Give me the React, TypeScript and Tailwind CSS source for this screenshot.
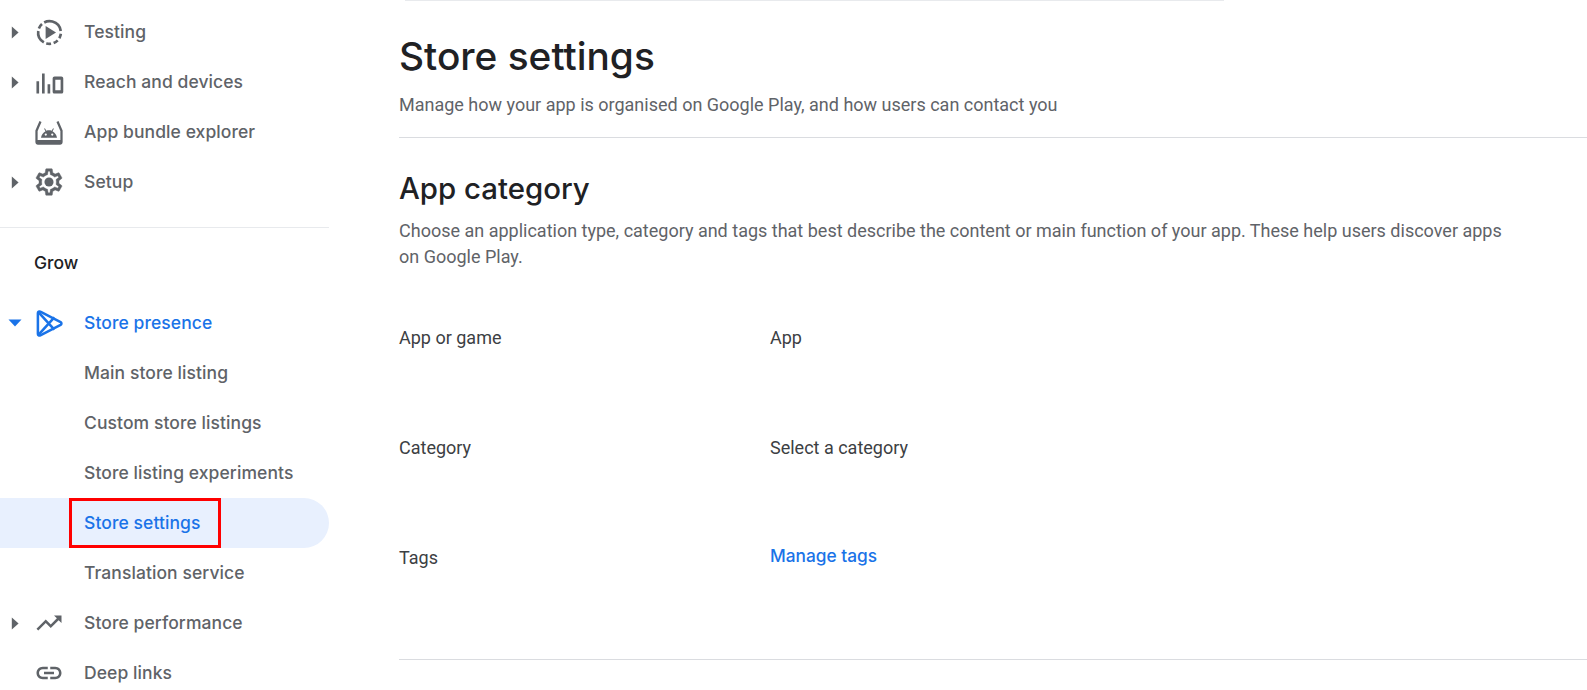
import React from "react";

const GS = "font-['Inter',sans-serif]";

const Arrow = () => (
  <svg width="8" height="13" viewBox="0 0 8 13" className="block">
    <path d="M0.8 0.5 L7.6 6.5 L0.8 12.5 Z" fill="#5f6368" />
  </svg>
);
const ArrowDown = () => (
  <svg width="14" height="8" viewBox="0 0 14 8" className="block">
    <path d="M0.5 0.5 H13.5 L7 7.5 Z" fill="#1a73e8" />
  </svg>
);

const Ico = ({ children, c = "#5f6368", s = 30 }: { children: React.ReactNode; c?: string; s?: number }) => (
  <svg width={s} height={s} viewBox="0 0 24 24" fill={c} className="block shrink-0">
    {children}
  </svg>
);

const Testing = () => (
  <Ico s={29}>
    <circle cx="12" cy="12" r="9.4" fill="none" stroke="#5f6368" strokeWidth="2.2" strokeDasharray="11 2.2 4 2.2 4 2.2 4 2.2 11 2.2 4.5 2.2 10" transform="rotate(-75 12 12)" />
    <path d="M8.8 6.6 L17.4 12 L8.8 17.4 Z" />
  </Ico>
);
const Reach = () => (
  <Ico s={29}>
    <path d="M1.2 11h2.2v10.2H1.2zM5.8 4.6H8v16.6H5.8zM10.4 13.5h2.2v7.7h-2.2z" />
    <path fillRule="evenodd" d="M16.2 7h5.6c.9 0 1.6.7 1.6 1.6v11c0 .9-.7 1.6-1.6 1.6h-5.6c-.9 0-1.6-.7-1.6-1.6v-11c0-.9.7-1.6 1.6-1.6zm.6 2.8v8.6h4.4V9.8z" />
  </Ico>
);
const Bundle = () => (
  <Ico s={30}>
    <path fill="none" stroke="#5f6368" strokeWidth="1.8" d="M5.2 3.6 L2 11 V20.2 c0 .6.4 1 1 1 H21 c.6 0 1-.4 1-1 V11 L18.8 3.6" />
    <path d="M2 18.4h20v2.8H2z" />
    <path d="M5.6 16.6c.3-2.4 1.7-4.3 3.6-5.3L8.1 9.4l.6-.4 1.2 2c.6-.3 1.3-.4 2.1-.4s1.5.1 2.1.4l1.2-2 .6.4-1.1 1.9c1.9 1 3.3 2.9 3.6 5.3z" />
    <circle cx="9.4" cy="14" r=".9" fill="#fff" />
    <circle cx="14.6" cy="14" r=".9" fill="#fff" />
  </Ico>
);
const Gear = () => (
  <Ico s={32}>
    <path d="M19.43 12.98c.04-.32.07-.64.07-.98 0-.34-.03-.66-.07-.98l2.11-1.65c.19-.15.24-.42.12-.64l-2-3.46c-.09-.16-.26-.25-.44-.25-.06 0-.12.01-.17.03l-2.49 1c-.52-.4-1.08-.73-1.69-.98l-.38-2.65C14.46 2.18 14.25 2 14 2h-4c-.25 0-.46.18-.49.42l-.38 2.65c-.61.25-1.17.59-1.69.98l-2.49-1c-.06-.02-.12-.03-.18-.03-.17 0-.34.09-.43.25l-2 3.46c-.13.22-.07.49.12.64l2.11 1.65c-.04.32-.07.65-.07.98 0 .33.03.66.07.98l-2.11 1.65c-.19.15-.24.42-.12.64l2 3.46c.09.16.26.25.44.25.06 0 .12-.01.17-.03l2.49-1c.52.4 1.08.73 1.69.98l.38 2.65c.03.24.24.42.49.42h4c.25 0 .46-.18.49-.42l.38-2.65c.61-.25 1.17-.59 1.69-.98l2.49 1c.06.02.12.03.18.03.17 0 .34-.09.43-.25l2-3.46c.12-.22.07-.49-.12-.64l-2.11-1.65zm-1.98-1.71c.04.31.05.52.05.73 0 .21-.02.43-.05.73l-.14 1.13.89.7 1.08.84-.7 1.21-1.27-.51-1.04-.42-.9.68c-.43.32-.84.56-1.25.73l-1.06.43-.16 1.13-.2 1.35h-1.4l-.19-1.35-.16-1.13-1.06-.43c-.43-.18-.83-.41-1.23-.71l-.91-.7-1.06.43-1.27.51-.7-1.21 1.08-.84.89-.7-.14-1.13c-.03-.31-.05-.54-.05-.74s.02-.43.05-.73l.14-1.13-.89-.7-1.08-.84.7-1.21 1.27.51 1.04.42.9-.68c.43-.32.84-.56 1.25-.73l1.06-.43.16-1.13.2-1.35h1.39l.19 1.35.16 1.13 1.06.43c.43.18.83.41 1.23.71l.91.7 1.06-.43 1.27-.51.7 1.21-1.07.85-.89.7.14 1.13z" stroke="#5f6368" strokeWidth="0.3" />
    <circle cx="12" cy="12" r="3.4" />
  </Ico>
);
const Play = () => (
  <Ico c="#1a73e8" s={29}>
    <g fill="none" stroke="#1a73e8" strokeWidth="2.1" strokeLinejoin="round">
      <path d="M2.4 3.4 c0-1.1 1.1-1.7 2-1.2 L21.2 10.8 c.9.5.9 1.9 0 2.4 L4.4 21.8 c-.9.5-2-.1-2-1.2 Z" />
      <path d="M3.2 3 L16 17 M3.2 21 L16 7" />
    </g>
  </Ico>
);
const Trend = () => (
  <Ico s={30}>
    <path d="M16 6l2.29 2.29-4.88 4.88-4-4L2 16.59 3.41 18l6-6 4 4 6.3-6.29L22 12V6z" />
  </Ico>
);
const LinkIco = () => (
  <Ico s={30}>
    <path d="M17 7h-4v2h4c1.65 0 3 1.35 3 3s-1.35 3-3 3h-4v2h4c2.76 0 5-2.24 5-5s-2.24-5-5-5zm-6 8H7c-1.65 0-3-1.35-3-3s1.35-3 3-3h4V7H7c-2.76 0-5 2.24-5 5s2.24 5 5 5h4v-2zm-3-4h8v2H8z" />
  </Ico>
);

function Row({ label, icon, arrow, active, selected }: { label: string; icon?: React.ReactNode; arrow?: React.ReactNode; active?: boolean; selected?: boolean }) {
  return (
    <div className={`flex h-[50px] items-center rounded-r-[25px] ${selected ? "bg-[#e8f0fe]" : ""}`}>
      <div className="flex w-[36px] shrink-0 items-center pl-[8px]">
        <div className="flex w-[14px] justify-center">{arrow}</div>
      </div>
      <div className="flex w-[26px] shrink-0 items-center justify-center">{icon}</div>
      <span className={`${GS} ml-[22px] pt-[1px] text-[17.5px] font-medium tracking-[0.08px] ${active || selected ? "text-[#1a73e8]" : "text-[#5f6368]"}`}>{label}</span>
    </div>
  );
}

function Field({ label, children }: { label: string; children: React.ReactNode }) {
  return (
    <div className="flex h-[110px] items-start">
      <div className="w-[371px] shrink-0 font-['Roboto',sans-serif] text-[18px] leading-[24px] text-[#3c4043]">{label}</div>
      <div>{children}</div>
    </div>
  );
}

export default function App() {
  return (
    <div className="relative flex h-[690px] w-[1587px] overflow-hidden bg-white">
      <aside className="relative w-[329px] shrink-0 pt-[7px]">
        <Row label="Testing" arrow={<Arrow />} icon={<Testing />} />
        <Row label="Reach and devices" arrow={<Arrow />} icon={<Reach />} />
        <Row label="App bundle explorer" icon={<Bundle />} />
        <Row label="Setup" arrow={<Arrow />} icon={<Gear />} />
        <div className="mt-[20px] h-px bg-[#e8eaed]" />
        <div className={`${GS} flex h-[70px] items-center pt-[1px] pl-[34px] text-[17.5px] font-medium text-[#202124]`}>Grow</div>
        <Row label="Store presence" active arrow={<ArrowDown />} icon={<Play />} />
        <Row label="Main store listing" />
        <Row label="Custom store listings" />
        <Row label="Store listing experiments" />
        <Row label="Store settings" selected />
        <Row label="Translation service" />
        <Row label="Store performance" arrow={<Arrow />} icon={<Trend />} />
        <Row label="Deep links" icon={<LinkIco />} />
        <div className="absolute left-[69px] top-[498px] h-[50px] w-[152px] border-[3px] border-[#ff0000]" />
      </aside>

      <main className="min-w-0 flex-1 pl-[70px]">
        <div className="ml-[6px] h-px w-[819px] bg-[#e8eaed]" />
        <h1 className={`${GS} mt-[30px] text-[38.8px] font-medium leading-[50px] text-[#202124]`}>Store settings</h1>
        <p className="mt-[12px] font-['Roboto',sans-serif] text-[18px] leading-[24px] text-[#5f6368]">
          Manage how your app is organised on Google Play, and how users can contact you
        </p>
        <div className="mt-[20px] h-px bg-[#dadce0]" />
        <h2 className={`${GS} mt-[31px] text-[29.4px] font-medium leading-[40px] text-[#202124]`}>App category</h2>
        <p className="mt-[9px] w-[1112px] font-['Roboto',sans-serif] text-[18px] leading-[26px] text-[#5f6368]">
          Choose an application type, category and tags that best describe the content or main function of your app. These help users discover apps on Google Play.
        </p>
        <div className="mt-[56px]">
          <Field label="App or game"><span className="font-['Roboto',sans-serif] text-[18px] leading-[24px] text-[#3c4043]">App</span></Field>
          <Field label="Category"><span className="font-['Roboto',sans-serif] text-[18px] leading-[24px] text-[#3c4043]">Select a category</span></Field>
          <Field label="Tags"><span className={`${GS} relative -top-[2px] text-[17.3px] font-medium leading-[24px] text-[#1a73e8]`}>Manage tags</span></Field>
        </div>
        <div className="mt-[3px] h-px bg-[#dadce0]" />
      </main>
    </div>
  );
}
